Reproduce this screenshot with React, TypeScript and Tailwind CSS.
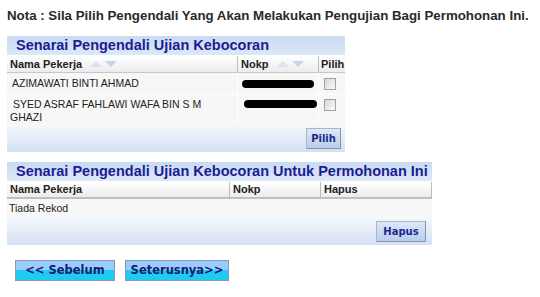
import React from "react";

const arial = { fontFamily: '"Liberation Sans", Arial, sans-serif' };

function SortArrows() {
  return (
    <span className="inline-flex items-center gap-[3px] ml-[8px] align-middle">
      <svg width="12" height="6" viewBox="0 0 12 6"><polygon points="0,6 6,0 12,6" fill="#d8e4f2" /></svg>
      <svg width="12" height="6" viewBox="0 0 12 6"><polygon points="0,0 12,0 6,6" fill="#c4d6ee" /></svg>
    </span>
  );
}

function Checkbox() {
  return <div className="w-[12px] h-[12px] border border-[#a0a0a0] bg-gradient-to-br from-[#d8d8d8] to-[#fafafa]" />;
}

function Redact({ w }: { w: number }) {
  return <div className="h-[8px] bg-black rounded-[4px]" style={{ width: w }} />;
}

function SmallBtn({ label, w }: { label: string; w: number }) {
  return (
    <div
      className="h-[21px] flex items-center justify-center border border-[#a9b4c4] border-r-[#8a94a4] border-b-[#8a94a4] bg-gradient-to-b from-[#dde7f7] to-[#b9cdee] text-[10px] font-bold text-[#1a2a8c]"
      style={{ width: w, fontFamily: '"DejaVu Sans", Verdana, sans-serif' }}
    >
      {label}
    </div>
  );
}

function NavBtn({ label, w }: { label: string; w: number }) {
  return (
    <div
      className="h-[21px] flex flex-col border border-[#8c98a8] overflow-hidden relative"
      style={{ width: w }}
    >
      <div className="h-[9px] bg-[#99ccff]" />
      <div className="flex-1 bg-[#1ecbf5]" />
      <div
        className="absolute inset-0 flex items-center justify-center text-[11.5px] font-bold text-[#1a1a6e]"
        style={{ fontFamily: '"DejaVu Sans", Verdana, sans-serif' }}
      >
        {label}
      </div>
    </div>
  );
}

export default function App() {
  return (
    <div className="w-[540px] h-[297px] bg-white relative" style={arial}>
      <div className="pt-[8px] pl-[7px] text-[13.3px] font-bold text-[#2a2a2a] leading-[15px] whitespace-nowrap">
        Nota : Sila Pilih Pengendali Yang Akan Melakukan Pengujian Bagi Permohonan Ini.
      </div>

      {/* Table 1 */}
      <div className="ml-[7px] mt-[13px] w-[338px]">
        <div className="h-[19px] bg-gradient-to-b from-[#c9dbf2] to-[#dce8f6] pl-[9px] text-[14.5px] font-bold text-[#1c1c94] leading-[19px]">
          Senarai Pengendali Ujian Kebocoran
        </div>
        <div className="grid grid-cols-[230px_81px_27px] h-[17px] mt-[1px] bg-gradient-to-b from-[#ffffff] to-[#ececec] border-b border-[#c8c8c8] text-[11px] font-bold text-[#222] leading-[16px]">
          <div className="pl-[3px] flex items-center">Nama Pekerja<SortArrows /></div>
          <div className="pl-[3px] border-l border-[#bdbdbd] flex items-center">Nokp<SortArrows /></div>
          <div className="pl-[2px] border-l border-[#bdbdbd]">Pilih</div>
        </div>
        <div className="grid grid-cols-[230px_81px_27px] h-[22px] bg-[#f7f7f7] text-[10.5px] text-[#222] border-b border-white">
          <div className="pl-[5px] flex items-center">AZIMAWATI BINTI AHMAD</div>
          <div className="border-l border-white flex items-center pl-[4px]"><Redact w={72} /></div>
          <div className="border-l border-white flex items-center pl-[5px]"><Checkbox /></div>
        </div>
        <div className="grid grid-cols-[230px_81px_27px] h-[30px] bg-[#f7f7f7] text-[10.5px] text-[#222] leading-[13px]">
          <div className="pl-[3px] pt-[3px]">&nbsp;SYED ASRAF FAHLAWI WAFA BIN S M<br />GHAZI</div>
          <div className="border-l border-white pl-[6px] pt-[5px]"><Redact w={73} /></div>
          <div className="border-l border-white pl-[5px] pt-[4px]"><Checkbox /></div>
        </div>
        <div className="h-[27px] bg-gradient-to-b from-[#f5f8fc] to-[#d3e1f3] flex justify-end items-center pr-[4px]">
          <SmallBtn label="Pilih" w={35} />
        </div>
      </div>

      {/* Table 2 */}
      <div className="ml-[7px] mt-[10px] w-[425px]">
        <div className="h-[19px] bg-gradient-to-b from-[#c9dbf2] to-[#dce8f6] pl-[9px] text-[14.5px] font-bold text-[#1c1c94] leading-[19px] whitespace-nowrap">
          Senarai Pengendali Ujian Kebocoran Untuk Permohonan Ini
        </div>
        <div className="grid grid-cols-[222px_91px_112px] h-[17px] mt-[1px] bg-gradient-to-b from-[#ffffff] to-[#ececec] border-b-2 border-[#c0c0c0] text-[11px] font-bold text-[#222] leading-[15px]">
          <div className="pl-[3px]">Nama Pekerja</div>
          <div className="pl-[3px] border-l border-[#bdbdbd]">Nokp</div>
          <div className="pl-[3px] border-l border-[#bdbdbd] border-r">Hapus</div>
        </div>
        <div className="h-[18px] bg-[#f7f7f7] text-[10.5px] text-[#222] pl-[2px] leading-[18px]">Tiada Rekod</div>
        <div className="h-[28px] bg-gradient-to-b from-[#f5f8fc] to-[#d3e1f3] flex justify-end items-center pr-[6px]">
          <SmallBtn label="Hapus" w={50} />
        </div>
      </div>

      <div className="flex gap-[10px] ml-[15px] mt-[15px]">
        <NavBtn label="<< Sebelum" w={100} />
        <NavBtn label="Seterusnya>>" w={104} />
      </div>
    </div>
  );
}
